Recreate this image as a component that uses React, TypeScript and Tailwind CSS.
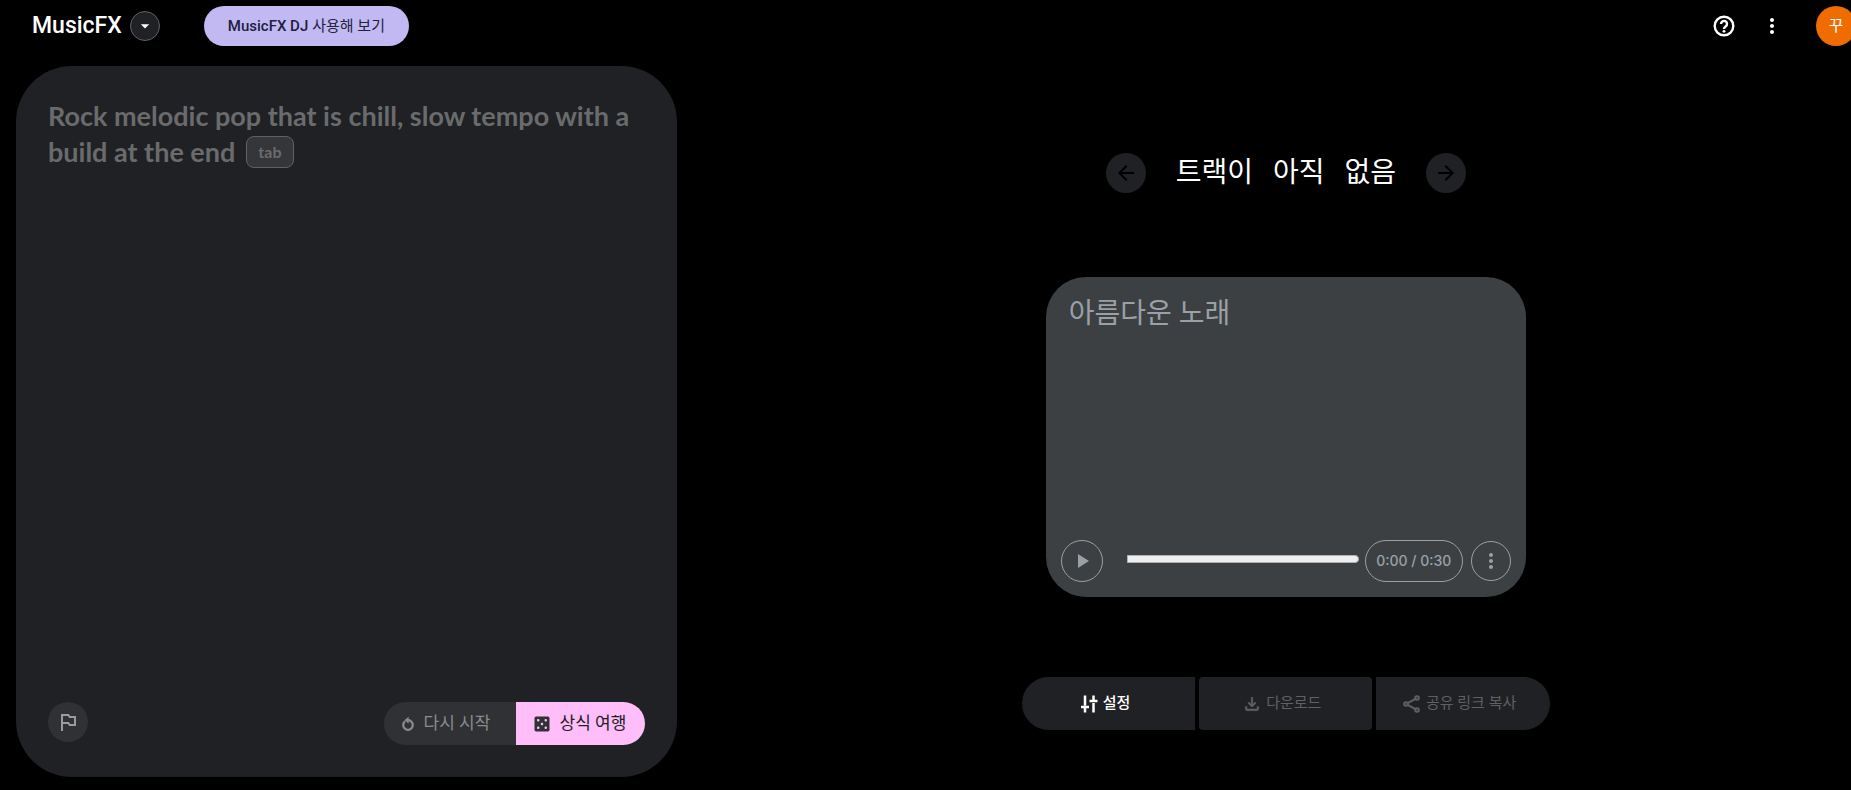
import { useState } from 'react'
import {
  MdArrowBack,
  MdArrowDropDown,
  MdArrowForward,
  MdCasino,
  MdMoreVert,
  MdOutlinedFlag,
  MdPlayArrow,
} from 'react-icons/md'

function HelpIcon() {
  return (
    <svg className="size-6" viewBox="0 0 24 24" fill="none" stroke="currentColor" strokeWidth="2.4">
      <circle cx="12" cy="12" r="9.300" />
      <path d="M9 10a3 3 0 1 1 4.800 2.300c-1.100.8-1.800 1.300-1.800 2.700" />
      <circle cx="12" cy="17.300" r="1.400" fill="currentColor" stroke="none" />
    </svg>
  )
}

function RestartIcon() {
  return (
    <svg className="size-4" viewBox="0 0 16 16" fill="none" stroke="currentColor" strokeWidth="2.2">
      <path d="M5 5.3A4.800 4.800 0 1 0 11 5.3C10.200 4.500 9.400 4.200 8 4.200" />
      <path d="M4.400 4.200 8.600 .8v6.800z" fill="currentColor" stroke="none" />
    </svg>
  )
}

function TuneIcon() {
  return (
    <svg className="size-5" viewBox="0 0 20 20" fill="none" stroke="currentColor" strokeWidth="2.5">
      <path d="M6 1.500v10M2 13h8M6 13v5.500M14.500 18.500V9M10.500 7h8M14.500 7V1.500" />
    </svg>
  )
}

function DownloadIcon() {
  return (
    <svg className="size-5" viewBox="0 -960 960 960" fill="currentColor" stroke="currentColor" strokeWidth="20">
      <path d="M480-320 280-520l56-58 104 104v-326h80v326l104-104 56 58-200 200ZM240-160q-33 0-56.500-23.500T160-240v-120h80v120h480v-120h80v120q0 33-23.500 56.500T720-160H240Z" />
    </svg>
  )
}

function ShareIcon() {
  return (
    <svg className="size-5" viewBox="0 0 20 20" fill="none" stroke="currentColor" strokeWidth="2">
      <circle cx="15" cy="4" r="1.800" />
      <circle cx="4" cy="10" r="1.800" />
      <circle cx="15" cy="16" r="1.800" />
      <path d="M5.600 9.100 13.400 4.900M5.600 10.900 13.400 15.100" />
    </svg>
  )
}

function Header() {
  return (
    <header className="flex items-center pt-[2px] pb-4 pl-8">
      <h1 className="font-['Roboto',sans-serif] text-[23px] leading-8 font-medium">MusicFX</h1>
      <button
        aria-label="도구 선택"
        className="ml-2 flex size-[30px] items-center justify-center rounded-full border border-[#5f6368] bg-[#202124]"
      >
        <MdArrowDropDown className="size-5" />
      </button>
      <a
        href="#dj"
        className="ml-11 flex h-10 items-center gap-1 rounded-full bg-[#c2b9f2] px-6 text-[15px] text-[#202040]"
      >
        <span className="font-medium">MusicFX DJ</span>
        <span>사용해 보기</span>
      </a>
      <div className="-mr-[5px] ml-auto flex items-center">
        <button aria-label="도움말" className="flex size-12 items-center justify-center">
          <HelpIcon />
        </button>
        <button aria-label="더보기" className="mr-5 flex size-12 items-center justify-center">
          <MdMoreVert className="size-6" />
        </button>
        <button aria-label="계정" className="size-10 rounded-full bg-[#ef6c00] text-base">
          꾸
        </button>
      </div>
    </header>
  )
}

function PromptPanel() {
  const [prompt, setPrompt] = useState('')

  return (
    <section className="flex w-[36%] flex-col rounded-[56px] bg-[#202124] p-8">
      <div className="relative flex flex-1 font-['Lato',sans-serif] text-[27px] leading-9 font-bold">
        <textarea
          aria-label="프롬프트"
          value={prompt}
          onChange={(e) => setPrompt(e.target.value)}
          className="flex-1 resize-none bg-transparent outline-none"
        />
        {!prompt && (
          <p className="pointer-events-none absolute inset-x-0 top-0 text-[#6a6b6d]">
            Rock melodic pop that is chill, slow tempo with a build at the end{' '}
            <kbd className="mt-0.5 ml-1 inline-flex h-8 w-12 items-center justify-center rounded-lg border border-[#5f6164] bg-[#35363a] align-top font-['Lato',sans-serif] text-base leading-4">
              tab
            </kbd>
          </p>
        )}
      </div>
      <div className="flex items-start justify-between">
        <button
          aria-label="신고"
          className="flex size-10 items-center justify-center rounded-full bg-[#303134] text-[#9a9b9d]"
        >
          <MdOutlinedFlag className="size-6" />
        </button>
        <div className="flex h-[43px] text-[17px]">
          <button className="flex w-[132px] items-center gap-2 rounded-l-full bg-[#303134] pl-4 text-[#8a8b8d]">
            <RestartIcon />
            다시 시작
          </button>
          <button className="flex w-[129px] items-center gap-2 rounded-r-full bg-[#ffbdfa] pl-4 text-[#202124]">
            <MdCasino className="size-5 text-[#303134]" />
            상식 여행
          </button>
        </div>
      </div>
    </section>
  )
}

function Player() {
  return (
    <div className="flex h-80 w-[480px] flex-col justify-between rounded-[40px] bg-[#3c4043] p-[15px] text-[#9aa0a6]">
      <h3 className="pt-1 pl-2 text-[28px] leading-9">아름다운 노래</h3>
      <div className="flex items-center">
        <button
          aria-label="재생"
          className="flex size-[42px] items-center justify-center rounded-full border border-[#9aa0a6]"
        >
          <MdPlayArrow className="size-6" />
        </button>
        <input
          type="range"
          aria-label="재생 위치"
          defaultValue={0}
          className="mr-[6px] mb-1 ml-6 h-2 min-w-0 flex-1 appearance-none rounded-r-full border border-[#b2b2b2] bg-[#efefef] [&::-webkit-slider-thumb]:appearance-none"
        />
        <span className="flex h-[42px] w-[98px] items-center justify-center rounded-full border border-[#9aa0a6] font-['Inter',sans-serif] text-sm font-medium">
          0:00 / 0:30
        </span>
        <button
          aria-label="트랙 메뉴"
          className="ml-2 flex size-10 items-center justify-center rounded-full border border-[#9aa0a6]"
        >
          <MdMoreVert className="size-6" />
        </button>
      </div>
    </div>
  )
}

function TrackPanel() {
  return (
    <section className="flex flex-1 flex-col items-center justify-center gap-20 pt-10 pl-11">
      <div className="flex w-[360px] items-center justify-between pb-1">
        <button
          aria-label="이전 트랙"
          disabled
          className="flex size-10 items-center justify-center rounded-full bg-[#202124] text-black"
        >
          <MdArrowBack className="size-6" />
        </button>
        <h2 className="flex gap-5 text-[28px] leading-10">
          <span>트랙이</span>
          <span>아직</span>
          <span>없음</span>
        </h2>
        <button
          aria-label="다음 트랙"
          disabled
          className="flex size-10 items-center justify-center rounded-full bg-[#202124] text-black"
        >
          <MdArrowForward className="size-6" />
        </button>
      </div>
      <Player />
      <div className="grid h-[53px] w-[528px] grid-cols-3 gap-1 text-[15px] text-[#5f6063]">
        <button className="flex items-center justify-center gap-1 rounded-l-full rounded-r-sm bg-[#202124] pr-2 font-medium text-white">
          <TuneIcon />
          설정
        </button>
        <button disabled className="flex items-center justify-center gap-1 rounded-sm bg-[#202124] pr-2">
          <DownloadIcon />
          다운로드
        </button>
        <button disabled className="flex items-center justify-center gap-1 rounded-l-sm rounded-r-full bg-[#202124] pr-2">
          <ShareIcon />
          공유 링크 복사
        </button>
      </div>
    </section>
  )
}

export default function App() {
  return (
    <div className="flex min-h-screen flex-col overflow-x-hidden bg-black font-['Roboto','Noto_Sans_CJK_KR',sans-serif] text-white">
      <Header />
      <main className="flex flex-1 pb-[13px] pl-4">
        <PromptPanel />
        <TrackPanel />
      </main>
    </div>
  )
}
